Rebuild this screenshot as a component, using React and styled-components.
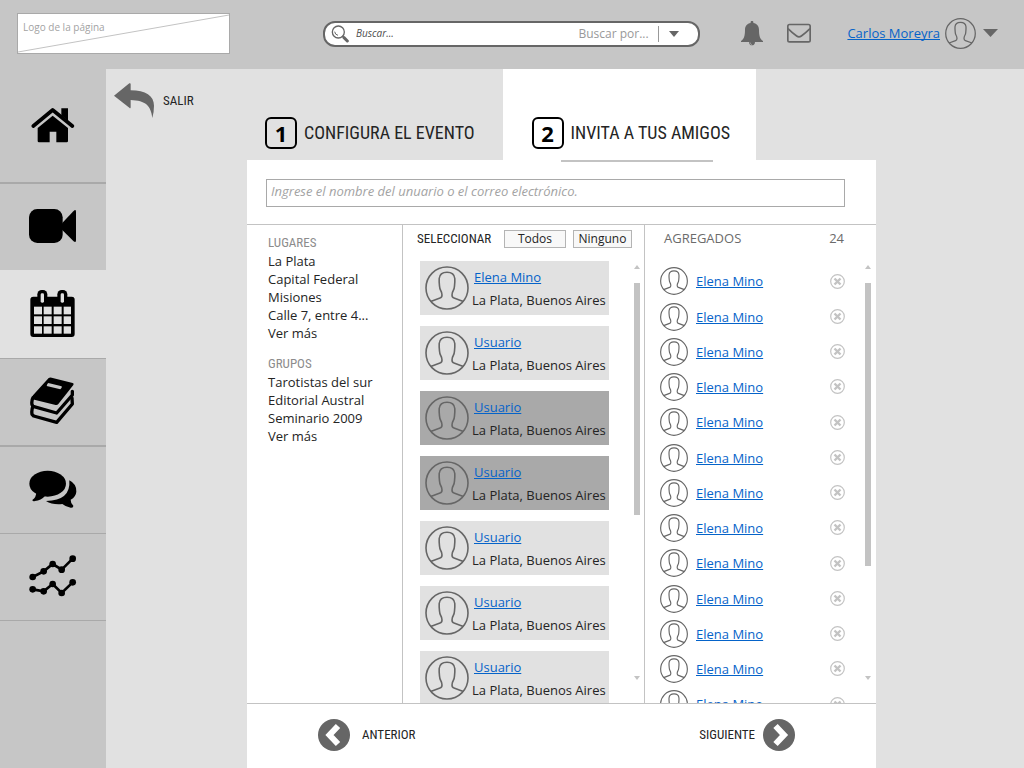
import React from 'react';
import styled, { createGlobalStyle, css } from 'styled-components';

const colors = {
  bar: '#c6c6c6',
  page: '#e1e1e1',
  line: '#a9a9a9',
  soft: '#c3c3c3',
  icon: '#666666',
  text: '#242424',
  link: '#0563c9',
};
const sans = '"Open Sans", "Noto Sans", sans-serif';
const condensed = '"Roboto Condensed", "Liberation Sans Narrow", Roboto, sans-serif';

const GlobalStyle = createGlobalStyle`
  *, *::before, *::after { box-sizing: border-box; }
  body { margin: 0; background: ${colors.page}; color: ${colors.text}; font: 13px/18px ${sans}; }
  button, input, select { font: inherit; color: inherit; margin: 0; }
  button { cursor: pointer; }
  ul { list-style: none; margin: 0; padding: 0; }
  h2 { margin: 0; }
  svg { display: block; flex: none; }
`;

const Page = styled.div`
  display: flex;
  flex-direction: column;
  height: 100vh;
  min-height: 560px;
`;

const TopBar = styled.header`
  flex: none;
  display: flex;
  align-items: center;
  height: 69px;
  padding: 0 26px 2px 17px;
  background: ${colors.bar};
`;

const Logo = styled.a`
  display: grid;
  width: 213px;
  height: 41px;
  border: 1px solid ${colors.line};
  background: #fff;
  color: #a3a3a3;
  font-size: 10px;
  line-height: 14px;
  text-decoration: none;

  > * { grid-area: 1 / 1; }
  > span { padding: 6px 5px; }
`;

const SearchBar = styled.form`
  flex: 1;
  min-width: 0;
  display: flex;
  align-items: center;
  height: 26px;
  margin: 0 41px 0 93px;
  padding: 0 19px 0 6px;
  border: 2px solid ${colors.icon};
  border-radius: 12px;
  background: #fff;
`;

const SearchInput = styled.input`
  flex: 1;
  min-width: 0;
  margin-left: 7px;
  padding: 0 0 2px;
  border: 0;
  outline: 0;
  background: none;
  font-size: 10px;
  font-style: italic;

  &::placeholder { color: #4d4d4d; opacity: 1; }
`;

const SearchScope = styled.select`
  appearance: none;
  width: 81px;
  height: 16px;
  padding: 0;
  border: 0;
  border-right: 1px solid #999;
  background: none;
  color: #999;
  font-size: 12px;
  line-height: 16px;
`;

const PlainButton = styled.button`
  display: flex;
  padding: 0;
  border: 0;
  background: none;
`;

const ScopeToggle = styled(PlainButton)`
  margin-left: 10px;
`;

const Account = styled.div`
  display: flex;
  align-items: center;
  padding-bottom: 1px;
`;

const AccountIcons = styled.div`
  display: flex;
  align-items: center;
  gap: 24px;
  margin-right: 36px;
`;

const Link = styled.a`
  color: ${colors.link};
  text-decoration: underline;
  text-decoration-skip-ink: none;
  text-underline-offset: 1px;
  white-space: nowrap;
`;

const AccountMenu = styled(PlainButton)`
  align-items: center;
  gap: 7px;
  margin-left: 5px;
`;

const Shell = styled.div`
  flex: 1;
  min-height: 0;
  display: flex;
`;

const SideNav = styled.nav`
  flex: none;
  width: 106px;
  background: ${colors.bar};
`;

const NavItem = styled.a`
  display: flex;
  align-items: center;
  justify-content: center;
  height: ${(p) => p.$height}px;
  padding: 0 1px 2px 0;
  border-bottom: ${(p) => p.$rule}px solid ${colors.line};
  color: #000;
  ${(p) => p.$active && css`background: ${colors.page};`}
`;

const Main = styled.main`
  flex: 1;
  min-width: 0;
  display: grid;
  grid-template-columns: 141px minmax(0, 1fr) 148px;
`;

const ExitLink = styled.a`
  display: flex;
  align-items: center;
  gap: 9px;
  align-self: start;
  padding: 14px 0 0 8px;
  color: inherit;
  font-family: ${condensed};
  text-decoration: none;
`;

const Wizard = styled.section`
  min-height: 0;
  display: flex;
  flex-direction: column;
`;

const Tabs = styled.div`
  flex: none;
  display: flex;
`;

const Tab = styled.button`
  position: relative;
  display: flex;
  align-items: center;
  gap: 7px;
  height: 91px;
  padding: ${(p) => (p.$active ? '37px 26px 0 29px' : '37px 28px 0 18px')};
  border: 0;
  background: ${(p) => (p.$active ? '#fff' : 'transparent')};
  font-family: ${condensed};
  font-size: 18px;
  line-height: 24px;
  white-space: nowrap;

  ${(p) => p.$active && css`
    &::after {
      content: '';
      position: absolute;
      top: 100%;
      left: 58px;
      right: 43px;
      height: 2px;
      background: ${colors.soft};
    }
  `}
`;

const StepNumber = styled.span`
  display: grid;
  place-items: center;
  width: 32px;
  height: 32px;
  border: 2px solid #000;
  border-radius: 6px;
  color: #000;
  font: 700 22px/24px ${sans};
`;

const Panel = styled.div`
  flex: 1;
  min-height: 0;
  display: flex;
  flex-direction: column;
  background: #fff;
`;

const InviteRow = styled.div`
  flex: none;
  padding: 19px 31px 17px 19px;
  border-bottom: 1px solid ${colors.soft};
`;

const InviteInput = styled.input`
  display: block;
  width: 100%;
  height: 28px;
  padding: 0 4px 4px;
  border: 1px solid ${colors.line};
  border-radius: 0;
  font-style: italic;

  &::placeholder { color: #a3a3a3; opacity: 1; }
`;

const Columns = styled.div`
  flex: 1;
  min-height: 0;
  display: grid;
  grid-template-columns: 156fr 242fr 231fr;
  grid-template-rows: minmax(0, 1fr);
  border-bottom: 1px solid ${colors.soft};
`;

const Column = styled.div`
  min-width: 0;
  min-height: 0;
  display: flex;
  flex-direction: column;

  & + & { border-left: 1px solid ${colors.soft}; margin-left: -1px; }
`;

const FilterGroup = styled.section`
  padding: 9px 12px 4px 21px;

  h2 {
    color: #8c8c8c;
    font: 400 13px/18px ${condensed};
  }
`;

const FilterLink = styled.a`
  color: inherit;
  text-decoration: none;
  white-space: nowrap;
`;

const ColumnHead = styled.div`
  flex: none;
  display: flex;
  align-items: center;
  height: 27px;
  padding: ${(p) => p.$padding};

  h2 { flex: 1; font: 400 13px/18px ${(p) => (p.$narrow ? condensed : sans)}; }
`;

const Added = styled(ColumnHead)`
  color: #6b6b6b;
`;

const SelectButton = styled.button`
  height: 18px;
  padding: 0;
  width: ${(p) => p.$width}px;
  margin-left: 7px;
  border: 1px solid #b4b4b4;
  background: #f8f8f8;
  font-size: 12px;
  line-height: 14px;
`;

const ScrollArea = styled.div`
  flex: 1;
  min-height: 0;
  display: flex;
  padding-right: 5px;
`;

const CandidateList = styled.ul`
  flex: 1;
  min-width: 0;
  display: flex;
  flex-direction: column;
  gap: 11px;
  padding: 9px 25px 0 17px;
  overflow: hidden;
`;

const Candidate = styled.li`
  flex: none;
  display: flex;
  align-items: center;
  gap: 3px;
  height: 54px;
  padding: 0 4px 0 5px;
  background: ${(p) => (p.$selected ? colors.line : colors.page)};
  white-space: nowrap;
`;

const CandidateText = styled.div`
  display: flex;
  flex-direction: column;
  align-items: flex-start;
  gap: 5px;

  a { margin-left: 2px; }
`;

const GuestList = styled.ul`
  flex: 1;
  min-width: 0;
  padding: 11px 20px 0 15px;
  overflow: hidden;
`;

const Guest = styled.li`
  display: flex;
  align-items: center;
  gap: 8px;
  height: 35px;

  &:nth-child(4n + 1) { height: 36px; }
  a { flex: 1; }
`;

const ScrollTrack = styled.div`
  flex: none;
  display: flex;
  flex-direction: column;
  align-items: center;
  justify-content: space-between;
  width: 6px;
  padding: 13px 0 23px;
`;

const ScrollRail = styled.div`
  flex: 1;
  align-self: stretch;
  margin: 14px 0 0;
`;

const ScrollThumb = styled.div`
  height: ${(p) => p.$share}%;
  background: ${colors.soft};
`;

const Footer = styled.footer`
  flex: none;
  display: flex;
  align-items: center;
  justify-content: space-between;
  height: 64px;
  padding: 0 81px 2px 71px;
`;

const StepButton = styled(PlainButton)`
  align-items: center;
  gap: ${(p) => p.$gap}px;
  font-family: ${condensed};
`;

function Avatar({ size, stroke }) {
  return (
    <svg width={size} height={size} viewBox="0 0 44 44" fill="none" stroke={colors.icon} strokeWidth={stroke} aria-hidden="true">
      <circle cx="22" cy="22" r="21" />
      <path d="M5.700 35.500 L15 32 Q17 31.500 17 29 Q17 26.500 15.700 24.500 Q14.700 23 14.500 20 C14.200 17 14 15 14.200 12.500 C14.600 8 17 6.200 22 6.200 C27 6.200 29.400 8 29.800 12.500 C30 15 29.800 17 29.500 20 Q29.300 23 28.300 24.500 Q27 26.500 27 29 Q27 31.500 29 32 L38.300 35.500" />
    </svg>
  );
}

const Caret = ({ width, height, up, color = colors.icon }) => (
  <svg width={width} height={height} viewBox="0 0 10 6" preserveAspectRatio="none" fill={color} aria-hidden="true">
    <path d={up ? 'M0 6 L5 0 L10 6 Z' : 'M0 0 L10 0 L5 6 Z'} />
  </svg>
);

const SearchIcon = () => (
  <svg width="18" height="18" viewBox="64 73 54 54" fill="none" stroke={colors.icon} aria-hidden="true">
    <circle cx="86" cy="94" r="18" strokeWidth="4" />
    <path d="M75 93 Q76 102 85 104" strokeWidth="3" />
    <path d="M98 106 L104 112" strokeWidth="5" />
    <path d="M103 111 L113 121" strokeWidth="9" strokeLinecap="round" />
  </svg>
);

const BellIcon = () => (
  <svg width="22" height="25" viewBox="93 62 66 75" fill={colors.icon} aria-hidden="true">
    <path d="M126 62 C129 62 131 64 130 68 C141 70 147 78 147 88 C147 106 150 116 159 122 V125 H135 C135 132 131 135 126 135 C121 135 117 132 117 125 H93 V122 C102 116 105 106 105 88 C105 78 111 70 122 68 C121 64 123 62 126 62 Z" />
    <path d="M120 126 Q120 132 126 133" fill="none" stroke={colors.bar} strokeWidth="1.500" />
  </svg>
);

const MailIcon = () => (
  <svg width="24" height="20" viewBox="231 74 72 60" fill="none" stroke={colors.icon} strokeWidth="5" aria-hidden="true">
    <rect x="233.500" y="78.500" width="67" height="52" rx="5" />
    <path d="M234 91 Q247 104 260 113 Q267 118 274 113 Q287 104 300 91" />
  </svg>
);

const HomeIcon = () => (
  <svg width="44" height="36" viewBox="92 106 132 108" aria-hidden="true">
    <path d="M183 110 H203 V147 L183 131 Z" />
    <path d="M99 163 L157 115 L216 163" fill="none" stroke="#000" strokeWidth="11" strokeLinecap="round" strokeLinejoin="round" />
    <path d="M112 169 L157 132 L203 169 V208 Q203 212 199 212 H168 V180 H148 V212 H116 Q112 212 112 208 Z" />
  </svg>
);

const VideoIcon = () => (
  <svg width="47" height="34" viewBox="87 418 141 102" aria-hidden="true">
    <rect x="87" y="418" width="101" height="102" rx="25" />
    <path d="M186 461 L220 425 Q228 417 228 426 V512 Q228 521 220 514 L186 480 Z" />
  </svg>
);

const CalendarIcon = () => (
  <svg width="45" height="47" viewBox="90 660 135 141" aria-hidden="true">
    <rect x="91" y="680" width="133" height="121" rx="9" />
    <rect x="112" y="660" width="30" height="46" rx="13" />
    <rect x="172" y="660" width="30" height="46" rx="13" />
    <g fill={colors.page}>
      <rect x="122" y="670" width="10" height="28" rx="4" />
      <rect x="182" y="670" width="10" height="28" rx="4" />
      {[710, 739, 769].map((y) => [102, 131, 161, 191].map((x) => (
        <rect key={`${x}-${y}`} x={x} y={y} width={x === 191 ? 22 : 24} height={y === 769 ? 22 : 23} />
      )))}
    </g>
  </svg>
);

const BooksIcon = () => (
  <svg width="45" height="48" viewBox="88 83 135 144" aria-hidden="true">
    <path d="M144 86 Q148 83 153 85 L216 101 Q221 103 218 107 L173 164 Q170 168 165 167 L101 151 Q90 147 97 138 Z" />
    <path d="M140 104 L143 101 L183 111 Q185 116 179 120 L138 110 Z" fill={colors.bar} />
    <g fill="none" stroke="#000" strokeWidth="10" strokeLinejoin="round" strokeLinecap="round">
      <path d="M97 145 Q92 154 94 166 L97 171 L168 191 L215 137 V126" />
      <path d="M97 171 Q92 181 94 195 L99 200 L168 219 L215 164 L214 146" />
    </g>
  </svg>
);

const ChatIcon = () => (
  <svg width="48" height="38" viewBox="86 366 144 114" aria-hidden="true">
    <ellipse cx="142" cy="407" rx="55" ry="39" />
    <path d="M108 432 Q108 448 96 456 Q97 461 104 459 Q122 457 134 444 Z" />
    <path d="M207 397 Q229 408 228 431 Q227 446 211 455 Q211 467 219 473 Q220 480 211 479 Q195 476 186 468 Q156 471 137 459 Q212 458 207 397 Z" />
  </svg>
);

const trends = [
  [[97, 674], [130, 657], [157, 635], [184, 652], [217, 619]],
  [[97, 711], [130, 717], [157, 695], [184, 722], [217, 690]],
];
const TrendIcon = () => (
  <svg width="48" height="42" viewBox="86 608 144 126" aria-hidden="true">
    {trends.map((points, i) => (
      <g key={i}>
        <polyline points={points.join(' ')} fill="none" stroke="#000" strokeWidth="8" />
        {points.map(([x, y]) => <circle key={x} cx={x} cy={y} r="10" />)}
      </g>
    ))}
  </svg>
);

const BackIcon = () => (
  <svg width="40" height="35" viewBox="342 248 120 105" fill={colors.icon} aria-hidden="true">
    <path d="M342 286 L388 249 Q392 247 392 252 V270 C437 270 462 287 462 316 Q462 336 457 353 C453 317 437 300 392 299 V320 Q392 326 388 322 Z" />
  </svg>
);

const StepIcon = ({ back }) => (
  <svg width="32" height="32" viewBox="0 0 32 32" aria-hidden="true">
    <circle cx="16" cy="16" r="16" fill={colors.icon} />
    <path d={back ? 'M20 7 L11.500 16 L20 25' : 'M12.500 7 L21 16 L12.500 25'} fill="none" stroke="#fff" strokeWidth="6" strokeLinejoin="miter" />
  </svg>
);

const RemoveIcon = () => (
  <svg width="15" height="15" viewBox="0 0 15 15" fill="none" stroke={colors.soft} aria-hidden="true">
    <circle cx="7.500" cy="7.500" r="6.800" strokeWidth="1.200" />
    <path d="M4.500 4.500 L10.500 10.500 M10.500 4.500 L4.500 10.500" strokeWidth="2.400" />
  </svg>
);

const navItems = [
  { label: 'Inicio', icon: <HomeIcon />, height: 115, rule: 2 },
  { label: 'Videos', icon: <VideoIcon />, height: 86, rule: 0 },
  { label: 'Calendario', icon: <CalendarIcon />, height: 89, rule: 1, active: true },
  { label: 'Biblioteca', icon: <BooksIcon />, height: 88, rule: 2 },
  { label: 'Mensajes', icon: <ChatIcon />, height: 87, rule: 1 },
  { label: 'Estadísticas', icon: <TrendIcon />, height: 87, rule: 1 },
];

const filters = [
  { title: 'LUGARES', items: ['La Plata', 'Capital Federal', 'Misiones', 'Calle 7, entre 4...', 'Ver más'] },
  { title: 'GRUPOS', items: ['Tarotistas del sur', 'Editorial Austral', 'Seminario 2009', 'Ver más'] },
];

const candidates = [
  { name: 'Elena Mino' },
  { name: 'Usuario' },
  { name: 'Usuario', selected: true },
  { name: 'Usuario', selected: true },
  { name: 'Usuario' },
  { name: 'Usuario' },
  { name: 'Usuario' },
];

const guests = Array.from({ length: 13 }, () => 'Elena Mino');

const Scrollbar = ({ share }) => (
  <ScrollTrack aria-hidden="true">
    <Caret width={6} height={4} up color={colors.soft} />
    <ScrollRail><ScrollThumb $share={share} /></ScrollRail>
    <Caret width={6} height={4} color={colors.soft} />
  </ScrollTrack>
);

export default function App() {
  return (
    <Page>
      <GlobalStyle />
      <TopBar>
        <Logo href="#">
          <svg width="100%" height="100%" viewBox="0 0 211 39" preserveAspectRatio="none" aria-hidden="true">
            <path d="M0 38 L211 1" stroke={colors.soft} />
          </svg>
          <span>Logo de la página</span>
        </Logo>
        <SearchBar role="search">
          <SearchIcon />
          <SearchInput type="text" aria-label="Buscar" placeholder="Buscar..." />
          <SearchScope aria-label="Buscar por">
            <option>Buscar por...</option>
          </SearchScope>
          <ScopeToggle type="button" aria-label="Opciones de búsqueda"><Caret width={10} height={6} /></ScopeToggle>
        </SearchBar>
        <Account>
          <AccountIcons>
            <PlainButton type="button" aria-label="Notificaciones"><BellIcon /></PlainButton>
            <PlainButton type="button" aria-label="Correo"><MailIcon /></PlainButton>
          </AccountIcons>
          <Link href="#">Carlos Moreyra</Link>
          <AccountMenu type="button" aria-label="Cuenta">
            <Avatar size={31} stroke={1.8} />
            <Caret width={15} height={8} />
          </AccountMenu>
        </Account>
      </TopBar>
      <Shell>
        <SideNav aria-label="Principal">
          {navItems.map((item) => (
            <NavItem key={item.label} href="#" aria-label={item.label} $height={item.height} $rule={item.rule} $active={item.active}>
              {item.icon}
            </NavItem>
          ))}
        </SideNav>
        <Main>
          <ExitLink href="#"><BackIcon />SALIR</ExitLink>
          <Wizard>
            <Tabs>
              <Tab type="button"><StepNumber>1</StepNumber>CONFIGURA EL EVENTO</Tab>
              <Tab type="button" $active><StepNumber>2</StepNumber>INVITA A TUS AMIGOS</Tab>
            </Tabs>
            <Panel>
              <InviteRow>
                <InviteInput type="text" aria-label="Invitado" placeholder="Ingrese el nombre del unuario o el correo electrónico." />
              </InviteRow>
              <Columns>
                <Column>
                  {filters.map((group) => (
                    <FilterGroup key={group.title}>
                      <h2>{group.title}</h2>
                      <ul>
                        {group.items.map((item) => <li key={item}><FilterLink href="#">{item}</FilterLink></li>)}
                      </ul>
                    </FilterGroup>
                  ))}
                </Column>
                <Column>
                  <ColumnHead $narrow $padding="0 13px 0 14px">
                    <h2>SELECCIONAR</h2>
                    <SelectButton type="button" $width={62}>Todos</SelectButton>
                    <SelectButton type="button" $width={59}>Ninguno</SelectButton>
                  </ColumnHead>
                  <ScrollArea>
                    <CandidateList>
                      {candidates.map((person, i) => (
                        <Candidate key={i} $selected={person.selected}>
                          <Avatar size={44} stroke={1.6} />
                          <CandidateText>
                            <Link href="#">{person.name}</Link>
                            <span>La Plata, Buenos Aires</span>
                          </CandidateText>
                        </Candidate>
                      ))}
                    </CandidateList>
                    <Scrollbar share={59} />
                  </ScrollArea>
                </Column>
                <Column>
                  <Added $padding="0 32px 2px 19px">
                    <h2>AGREGADOS</h2>
                    <span>24</span>
                  </Added>
                  <ScrollArea>
                    <GuestList>
                      {guests.map((name, i) => (
                        <Guest key={i}>
                          <Avatar size={28} stroke={1.8} />
                          <Link href="#">{name}</Link>
                          <PlainButton type="button" aria-label={`Quitar a ${name}`}><RemoveIcon /></PlainButton>
                        </Guest>
                      ))}
                    </GuestList>
                    <Scrollbar share={72} />
                  </ScrollArea>
                </Column>
              </Columns>
              <Footer>
                <StepButton type="button" $gap={12}><StepIcon back />ANTERIOR</StepButton>
                <StepButton type="button" $gap={8}>SIGUIENTE<StepIcon /></StepButton>
              </Footer>
            </Panel>
          </Wizard>
        </Main>
      </Shell>
    </Page>
  );
}
